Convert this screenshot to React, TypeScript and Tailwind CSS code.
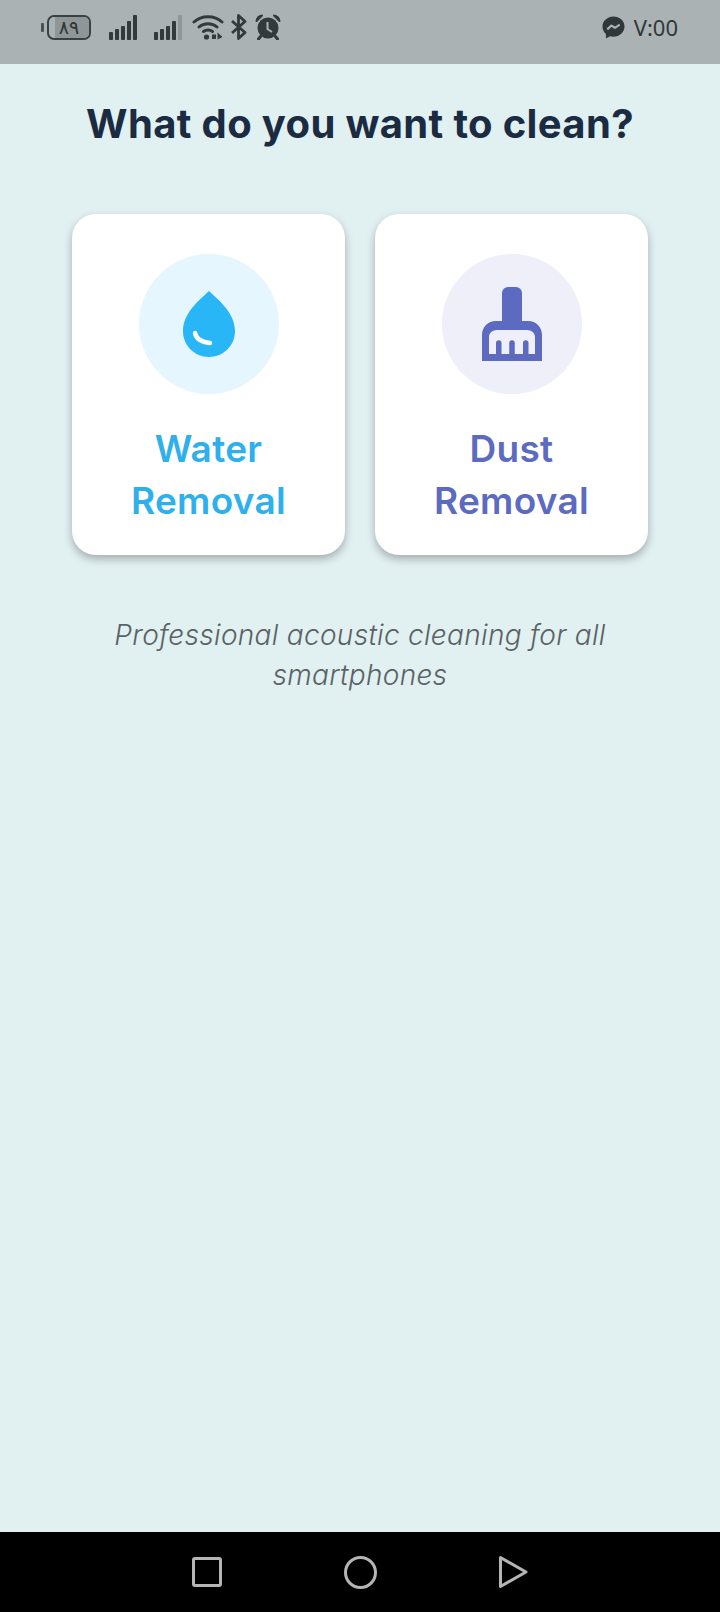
import React from "react";

const Signal = ({ dim }: { dim?: boolean }) => (
  <svg width="29" height="26" viewBox="0 0 29 26" className="shrink-0">
    <rect x="0" y="18" width="4" height="8" rx="0.8" fill="#333a3c" />
    <rect x="6" y="15" width="4" height="11" rx="0.8" fill="#333a3c" />
    <rect x="12" y="12" width="4" height="14" rx="0.8" fill="#333a3c" />
    <rect x="18" y="7" width="4" height="19" rx="0.8" fill="#333a3c" />
    <rect x="24" y="1" width="4" height="25" rx="0.8" fill={dim ? "#8f9799" : "#333a3c"} />
  </svg>
);

const StatusBar = () => (
  <div className="h-[64px] bg-[#aab2b3] flex items-center justify-between pl-[41px] pr-[42px] pb-[10px] shrink-0">
    <div className="flex items-center">
      {/* battery */}
      <div className="w-[3px] h-[9px] bg-[#4a5153] rounded-[1px] mr-[3px]" />
      <div className="relative w-[44px] h-[25px] border-[2px] border-[#3a4143] rounded-[7px] overflow-hidden flex justify-end">
        <div className="w-[34px] h-full bg-[#8f9698]" />
        <span className="absolute inset-0 flex items-center justify-center text-[19px] leading-none text-[#2f3537] font-['DejaVu_Sans',sans-serif]">
          ۸۹
        </span>
      </div>
      <div className="ml-[18px]">
        <Signal />
      </div>
      <div className="ml-[16px]">
        <Signal dim />
      </div>
      {/* wifi */}
      <svg width="32" height="26" viewBox="0 0 32 26" className="ml-[9px]">
        <g fill="none" stroke="#333a3c" strokeWidth="3" strokeLinecap="round">
          <path d="M2 8C9.500 1 22.500 1 30 8" />
          <path d="M7 13C12 8.500 20 8.500 25 13" />
          <path d="M11.500 17.500C14 15.500 18 15.500 20.500 17.500" />
        </g>
        <circle cx="14.500" cy="23" r="2.600" fill="#333a3c" />
        <path d="M20 20.500h4v4.500h-4zM25.500 18.500l5 4.500-5 2.500z" fill="#333a3c" />
      </svg>
      {/* bluetooth */}
      <svg width="18" height="26" viewBox="0 0 18 26" className="ml-[6px]">
        <path d="M2 7l13 11.500-6.500 6V1.500l6.500 6L2 19" fill="none" stroke="#333a3c" strokeWidth="2.800" strokeLinejoin="round" />
      </svg>
      {/* alarm */}
      <svg width="26" height="26" viewBox="0 0 26 26" className="ml-[7px]">
        <circle cx="13" cy="14" r="10.500" fill="#333a3c" />
        <path d="M1.500 7C2 4 4 2 7 1.500L1.500 7zM24.500 7C24 4 22 2 19 1.500L24.500 7z" fill="#333a3c" stroke="#333a3c" strokeWidth="2" strokeLinejoin="round" />
        <path d="M5.500 22.500L3.500 25M20.500 22.500L22.500 25" stroke="#333a3c" strokeWidth="3" strokeLinecap="round" />
        <path d="M12.500 8v7l4.500 3" fill="none" stroke="#aab2b3" strokeWidth="2" />
      </svg>
    </div>
    <div className="flex items-center">
      {/* messenger */}
      <svg width="23" height="24" viewBox="0 0 24 24" className="mr-[9px]">
        <path d="M12 1C5.800 1 .5 5.500.5 11.500c0 3.100 1.300 5.800 3.600 7.700V24l4.200-2.400c1.200.3 2.400.5 3.700.5 6.200 0 11.500-4.500 11.500-10.600S18.200 1 12 1z" fill="#30373a" />
        <path d="M5.500 14.500l4.300-4 3.700 2.300 5-3.300" fill="none" stroke="#aab2b3" strokeWidth="2.200" strokeLinejoin="round" />
      </svg>
      <span className="text-[22px] leading-none text-[#30373a] font-['Noto_Sans',sans-serif]">
        V:00
      </span>
    </div>
  </div>
);

const DropIcon = () => (
  <svg width="54" height="68" viewBox="0 0 54 68">
    <path d="M27 1C17 10.500 1 23 1 41c0 14.500 11.500 26 26 26s26-11.500 26-26C53 23 37 10.500 27 1z" fill="#29b6f6" />
    <path d="M13 43c1 5 6 9 15 10" fill="none" stroke="#ffffff" strokeWidth="4.500" strokeLinecap="round" />
  </svg>
);

const BrushIcon = () => (
  <svg width="60" height="74" viewBox="0 0 60 74">
    <path
      fillRule="evenodd"
      d="M20 6a6 6 0 0 1 6-6h8a6 6 0 0 1 6 6v28h6c8 0 14 6 14 14v26H0V48c0-8 6-14 14-14h6zM15 43c-4.500 0-8 3-8 7v17h7V56a2.750 2.750 0 0 1 5.500 0v11h7.750V56a2.750 2.750 0 0 1 5.500 0v11H41V56a2.750 2.750 0 0 1 5.500 0v11H53V50c0-4-3.500-7-8-7z"
      fill="#5c6bc0"
    />
  </svg>
);

const Card = ({
  icon,
  circle,
  text,
  lines,
}: {
  icon: React.ReactNode;
  circle: string;
  text: string;
  lines: string[];
}) => (
  <div className="w-[273px] h-[341px] bg-white rounded-[24px] shadow-[0_4px_9px_rgba(0,0,0,0.28)] flex flex-col items-center pt-[40px]">
    <div className={`w-[140px] h-[140px] rounded-full flex items-center justify-center ${circle}`}>{icon}</div>
    <div className={`mt-[29px] text-center text-[37px] leading-[52px] font-semibold tracking-[0.3px] ${text}`}>
      {lines.map((l) => (
        <div key={l}>{l}</div>
      ))}
    </div>
  </div>
);

export default function App() {
  return (
    <div className="w-[720px] h-[1612px] flex flex-col bg-[#e1f0f1] font-['Inter',sans-serif]">
      <StatusBar />
      <div className="flex-1 flex flex-col items-center">
        <h1 className="mt-[34px] text-[40px] leading-[52px] font-bold tracking-[0.35px] text-[#1a2b42] text-center">
          What do you want to clean?
        </h1>
        <div className="mt-[64px] flex gap-[30px]">
          <Card
            icon={<DropIcon />}
            circle="bg-[#e6f6fe]"
            text="text-[#2fb0ec]"
            lines={["Water", "Removal"]}
          />
          <Card
            icon={<BrushIcon />}
            circle="bg-[#eeeff9]"
            text="text-[#5c6bc0]"
            lines={["Dust", "Removal"]}
          />
        </div>
        <p className="mt-[60px] w-[540px] text-center text-[28px] leading-[40px] italic font-light tracking-[0.3px] text-[#5a6264]">
          Professional acoustic cleaning for all smartphones
        </p>
      </div>
      <div className="h-[80px] bg-black flex items-center gap-[122px] pl-[192px] shrink-0">
        <div className="w-[30px] h-[30px] border-[3px] border-[#b5b5b5] rounded-[3px]" />
        <div className="w-[33px] h-[33px] border-[3px] border-[#b5b5b5] rounded-full" />
        <svg width="30" height="34" viewBox="0 0 30 34">
          <path d="M1.500 2.500L27 17 1.500 31.500z" fill="none" stroke="#b5b5b5" strokeWidth="3" strokeLinejoin="round" />
        </svg>
      </div>
    </div>
  );
}
